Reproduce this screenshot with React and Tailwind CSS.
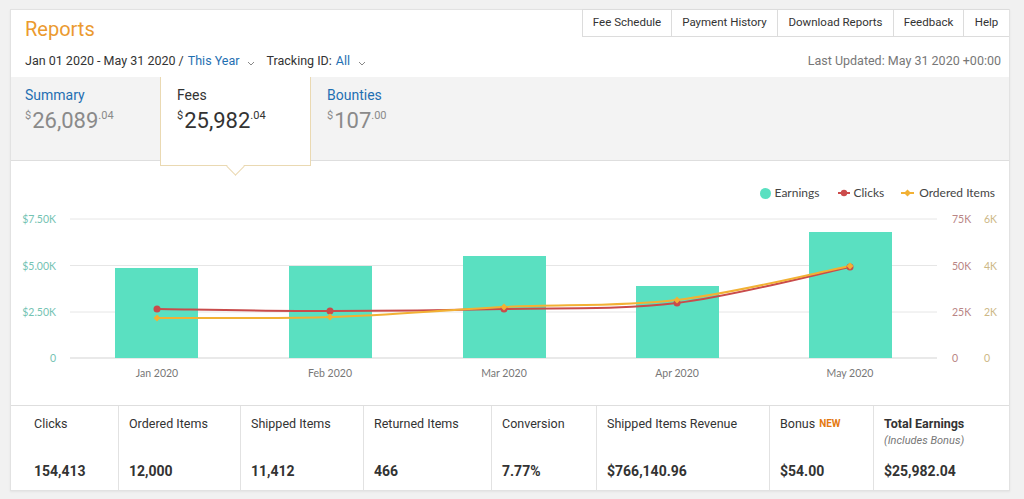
import React from "react";

const months = ["Jan 2020", "Feb 2020", "Mar 2020", "Apr 2020", "May 2020"];
const barX = [115, 289, 463, 636, 809];
const barTop = [268, 266, 256, 286, 232];
const centers = [157, 330, 504, 677, 850];
const clicksY = [309, 311, 309, 303, 267];
const orderedY = [318, 317, 307, 300, 266];

// page coords -> svg coords (svg starts at x=11, y=201)
const X = (p) => p - 11;
const Y = (p) => p - 201;

function smoothPath(xs, ys) {
  const pts = xs.map((x, i) => [X(x), Y(ys[i])]);
  let d = `M${pts[0][0]},${pts[0][1]}`;
  for (let i = 0; i < pts.length - 1; i++) {
    const p0 = pts[i - 1] || pts[i];
    const p1 = pts[i];
    const p2 = pts[i + 1];
    const p3 = pts[i + 2] || p2;
    const c1 = [p1[0] + (p2[0] - p0[0]) / 6, p1[1] + (p2[1] - p0[1]) / 6];
    const c2 = [p2[0] - (p3[0] - p1[0]) / 6, p2[1] - (p3[1] - p1[1]) / 6];
    d += ` C${c1[0]},${c1[1]} ${c2[0]},${c2[1]} ${p2[0]},${p2[1]}`;
  }
  return d;
}

function Chevron() {
  return (
    <svg width="8" height="5" viewBox="0 0 8 5" className="ml-[8px] mt-[4px]">
      <polyline points="1,1 4,4 7,1" fill="none" stroke="#888" strokeWidth="1" />
    </svg>
  );
}

function Amount({ whole, cents, dark }) {
  return (
    <div className={`flex items-start mt-[4px] ${dark ? "text-[#333]" : "text-[#8a8a8a]"}`}>
      <span className="text-[11px] leading-[14px] mt-[1px] mr-[1px]">$</span>
      <span className="text-[22px] leading-[26px]">{whole}</span>
      <span className="text-[11px] leading-[14px] mt-[1px]">{cents}</span>
    </div>
  );
}

const metrics = [
  { label: "Clicks", value: "154,413", w: "w-[107px]", pl: "pl-[23px]" },
  { label: "Ordered Items", value: "12,000", w: "w-[122px]" },
  { label: "Shipped Items", value: "11,412", w: "w-[123px]" },
  { label: "Returned Items", value: "466", w: "w-[128px]" },
  { label: "Conversion", value: "7.77%", w: "w-[105px]" },
  { label: "Shipped Items Revenue", value: "$766,140.96", w: "w-[173px]" },
  { label: "Bonus", value: "$54.00", w: "w-[104px]", isNew: true },
  { label: "Total Earnings", value: "$25,982.04", w: "w-[136px]", total: true },
];

const navItems = [
  ["Fee Schedule", "w-[89px]"],
  ["Payment History", "w-[106px]"],
  ["Download Reports", "w-[116px]"],
  ["Feedback", "w-[70px]"],
  ["Help", "w-[46px]"],
];

export default function App() {
  return (
    <div className="min-h-screen bg-[#f1f1f1] pt-[9px] pl-[10px] font-['Roboto',sans-serif] text-[#333]">
      <div className="w-[1000px] bg-white border border-[#e2e2e2] shadow-[0_1px_2px_rgba(0,0,0,0.06)]">
        {/* Header */}
        <div className="flex justify-between h-[35px]">
          <div className="pl-[14px] pt-[7px] text-[20px] leading-[24px] text-[#eb9a2f]">Reports</div>
          <div className="flex h-[28px] -mt-px">
            {navItems.map(([t, w]) => (
              <div
                key={t}
                className={`${w} flex items-center justify-center border-l border-b border-t border-[#dcdcdc] text-[11.5px] text-[#333]`}
              >
                {t}
              </div>
            ))}
          </div>
        </div>
        <div className="flex justify-between items-center h-[32px] pl-[14px] pr-[8px] text-[12.5px]">
          <div className="flex items-center">
            <span>Jan 01 2020 - May 31 2020 / </span>
            <span className="text-[#1f6fb2] ml-[4px]">This Year</span>
            <Chevron />
            <span className="ml-[11px]">Tracking ID:</span>
            <span className="text-[#1f6fb2] ml-[4px]">All</span>
            <Chevron />
          </div>
          <div className="text-[#777]">Last Updated: May 31 2020 +00:00</div>
        </div>

        {/* Tabs band */}
        <div className="flex h-[84px] bg-[#f3f3f3] border-b border-[#dedede]">
          <div className="w-[149px] pl-[14px] pt-[9px]">
            <div className="text-[14px] leading-[18px] text-[#1f6fb2]">Summary</div>
            <Amount whole="26,089" cents=".04" />
          </div>
          <div className="relative z-10 w-[151px] h-[89px] bg-white border-x border-b border-[#ead9b2] pl-[16px] pt-[9px]">
            <div className="text-[14px] leading-[18px] text-[#333]">Fees</div>
            <Amount whole="25,982" cents=".04" dark />
            <div className="absolute left-[68px] bottom-[-8px] w-[13px] h-[13px] rotate-45 bg-white border-r border-b border-[#ead9b2]" />
          </div>
          <div className="w-[150px] pl-[16px] pt-[9px]">
            <div className="text-[14px] leading-[18px] text-[#1f6fb2]">Bounties</div>
            <Amount whole="107" cents=".00" />
          </div>
        </div>

        {/* Chart */}
        <div className="h-[244px]">
          <div className="flex justify-end items-center pt-[24px] pr-[14px] h-[40px] text-[12px] text-[#444] font-['Lato',sans-serif]">
            <div className="flex items-center">
              <span className="w-[11px] h-[11px] rounded-full bg-[#5ae0c1] mr-[4px]" />
              <span>Earnings</span>
            </div>
            <div className="flex items-center ml-[19px]">
              <svg width="12" height="8" viewBox="0 0 12 8" className="mr-[3px]">
                <line x1="0" y1="4" x2="12" y2="4" stroke="#cc4b4b" strokeWidth="2" />
                <circle cx="6" cy="4" r="3.2" fill="#cc4b4b" />
              </svg>
              <span>Clicks</span>
            </div>
            <div className="flex items-center ml-[17px]">
              <svg width="13" height="8" viewBox="0 0 13 8" className="mr-[5px]">
                <line x1="0" y1="4" x2="13" y2="4" stroke="#f2b134" strokeWidth="2" />
                <polygon points="6.5,0.5 10,4 6.5,7.5 3,4" fill="#f2b134" />
              </svg>
              <span>Ordered Items</span>
            </div>
          </div>
          <svg width="998" height="204" viewBox="0 0 998 204" className="block font-['Lato',sans-serif]">
            {[219, 265.5, 312].map((y) => (
              <line key={y} x1={X(70)} x2={X(937)} y1={Y(y)} y2={Y(y)} stroke="#e6e6e6" strokeWidth="1" />
            ))}
            <line x1={X(70)} x2={X(937)} y1={Y(358)} y2={Y(358)} stroke="#d3d3d3" strokeWidth="1" />
            {[
              ["$7.50K", 219],
              ["$5.00K", 265.5],
              ["$2.50K", 312],
              ["0", 358],
            ].map(([t, y]) => (
              <text key={t} x={X(56)} y={Y(y) + 4} textAnchor="end" fontSize="10.5" fill="#74c3b3">
                {t}
              </text>
            ))}
            {[
              ["75K", "6K", 219],
              ["50K", "4K", 265.5],
              ["25K", "2K", 312],
              ["0", "0", 358],
            ].map(([a, b, y]) => (
              <g key={a}>
                <text x={X(952)} y={Y(y) + 4} fontSize="10.5" fill="#b98585">
                  {a}
                </text>
                <text x={X(984)} y={Y(y) + 4} fontSize="10.5" fill="#cdb886">
                  {b}
                </text>
              </g>
            ))}
            {barX.map((x, i) => (
              <rect key={x} x={X(x)} y={Y(barTop[i])} width="83" height={358 - barTop[i]} fill="#5ae0c1" />
            ))}
            {months.map((m, i) => (
              <text key={m} x={X(centers[i])} y={Y(373) + 4} textAnchor="middle" fontSize="10.5" fill="#777">
                {m}
              </text>
            ))}
            <path d={smoothPath(centers, clicksY)} fill="none" stroke="#c94b4b" strokeWidth="2" />
            <path d={smoothPath(centers, orderedY)} fill="none" stroke="#f2b134" strokeWidth="2" />
            {centers.map((x, i) => (
              <circle key={"c" + x} cx={X(x)} cy={Y(clicksY[i])} r="3.5" fill="#c94b4b" />
            ))}
            {centers.map((x, i) => (
              <polygon
                key={"o" + x}
                points={`${X(x)},${Y(orderedY[i]) - 3.5} ${X(x) + 3.5},${Y(orderedY[i])} ${X(x)},${Y(orderedY[i]) + 3.5} ${X(x) - 3.5},${Y(orderedY[i])}`}
                fill="#f2b134"
              />
            ))}
          </svg>
        </div>

        {/* Metrics */}
        <div className="flex h-[85px] border-t border-[#dedede]">
          {metrics.map((m, i) => (
            <div
              key={m.label}
              className={`${m.w} ${m.pl || "pl-[10px]"} ${i > 0 ? "border-l border-[#e2e2e2]" : ""} flex flex-col justify-between pt-[10px] pb-[10px]`}
            >
              <div>
                <div className={`text-[12.5px] leading-[16px] ${m.total ? "font-bold" : ""}`}>
                  {m.label}
                  {m.isNew && <span className="ml-[4px] text-[10px] font-bold text-[#e47911] align-top">NEW</span>}
                </div>
                {m.total && <div className="text-[11px] leading-[16px] italic text-[#777] mt-[1px]">(Includes Bonus)</div>}
              </div>
              <div className="text-[14px] leading-[18px] font-bold">{m.value}</div>
            </div>
          ))}
        </div>
      </div>
    </div>
  );
}
